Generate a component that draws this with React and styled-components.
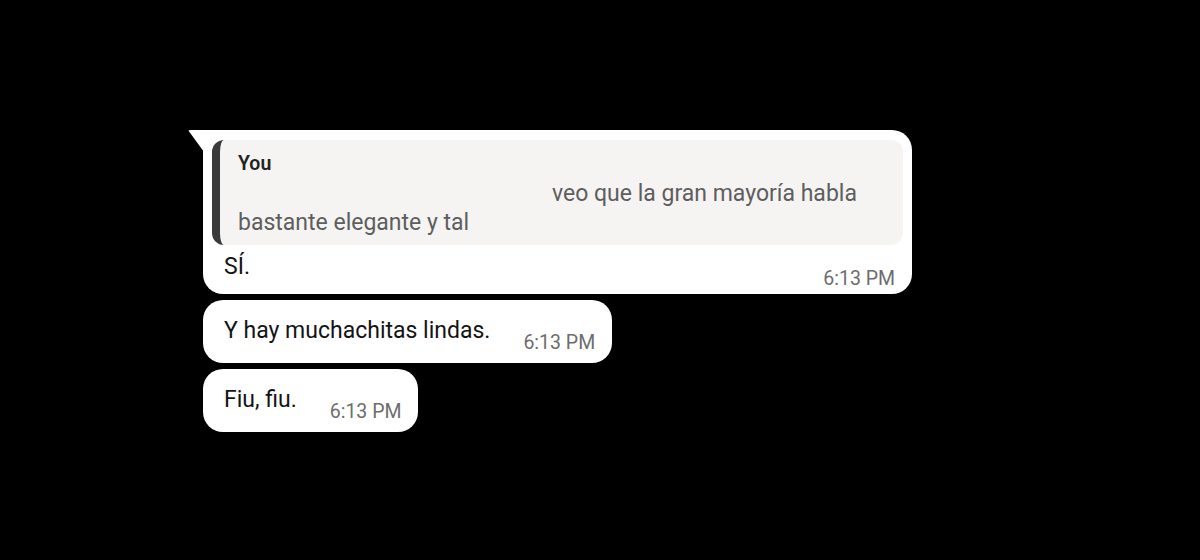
import React from "react";
import styled, { createGlobalStyle } from "styled-components";

const GlobalStyle = createGlobalStyle`
  html, body {
    margin: 0;
    padding: 0;
    background: #000;
  }
  body {
    font-family: Roboto, "Noto Sans", "Liberation Sans", sans-serif;
    -webkit-font-smoothing: antialiased;
  }
`;

const Screen = styled.div`
  width: 1200px;
  height: 560px;
  background: #000;
  box-sizing: border-box;
  padding: 130px 0 0 203px;
  display: flex;
  flex-direction: column;
  align-items: flex-start;
  gap: 6px;
  overflow: hidden;
`;

const Bubble = styled.div`
  position: relative;
  background: #fff;
  border-radius: ${(p) => (p.$tail ? "0 20px 20px 20px" : "20px")};
  box-sizing: border-box;
  width: ${(p) => p.$width || "auto"};
  padding: ${(p) => p.$pad};

  &::before {
    content: "";
    display: ${(p) => (p.$tail ? "block" : "none")};
    position: absolute;
    left: -15px;
    top: 0;
    width: 16px;
    height: 22px;
    background: #fff;
    clip-path: polygon(0 0, 100% 0, 100% 100%);
    border-top-left-radius: 2px;
  }
`;

const Quote = styled.div`
  background: #f5f4f3;
  border-left: 8px solid #3a3a3a;
  border-radius: 12px;
  padding: 14px 20px 8px 18px;
`;

const QuoteAuthor = styled.div`
  font-size: 19.5px;
  font-weight: 600;
  line-height: 20px;
  color: #222;
`;

const QuoteText = styled.div`
  margin-top: 5px;
  font-size: 23px;
  line-height: 29px;
  color: #5e5e5e;
  text-indent: 314px;
`;

const Footer = styled.div`
  display: flex;
  align-items: flex-start;
  justify-content: space-between;
  gap: ${(p) => p.$gap || "33px"};
  padding: ${(p) => p.$pad || "0"};
`;

const Text = styled.span`
  font-size: 23px;
  line-height: 30px;
  color: #141414;
  white-space: nowrap;
`;

const Time = styled.span`
  font-size: 19.5px;
  line-height: 24px;
  color: #6d6d6d;
  margin-top: 15px;
  white-space: nowrap;
`;

const messages = [
  { id: 2, text: "Y hay muchachitas lindas.", time: "6:13 PM" },
  { id: 3, text: "Fiu, fiu.", time: "6:13 PM" }
];

export default function App() {
  return (
    <>
      <GlobalStyle />
      <Screen>
        <Bubble $tail $width="709px" $pad="10px 9px 3px 9px">
          <Quote>
            <QuoteAuthor>You</QuoteAuthor>
            <QuoteText>
              veo que la gran mayoría habla
              <br />
              <span style={{ display: "inline-block", textIndent: 0 }}>
                bastante elegante y tal
              </span>
            </QuoteText>
          </Quote>
          <Footer $pad="7px 8px 0 12px">
            <Text>SÍ.</Text>
            <Time>6:13 PM</Time>
          </Footer>
        </Bubble>
        {messages.map((m) => (
          <Bubble key={m.id} $pad="16px 17px 8px 21px">
            <Footer>
              <Text>{m.text}</Text>
              <Time>{m.time}</Time>
            </Footer>
          </Bubble>
        ))}
      </Screen>
    </>
  );
}
